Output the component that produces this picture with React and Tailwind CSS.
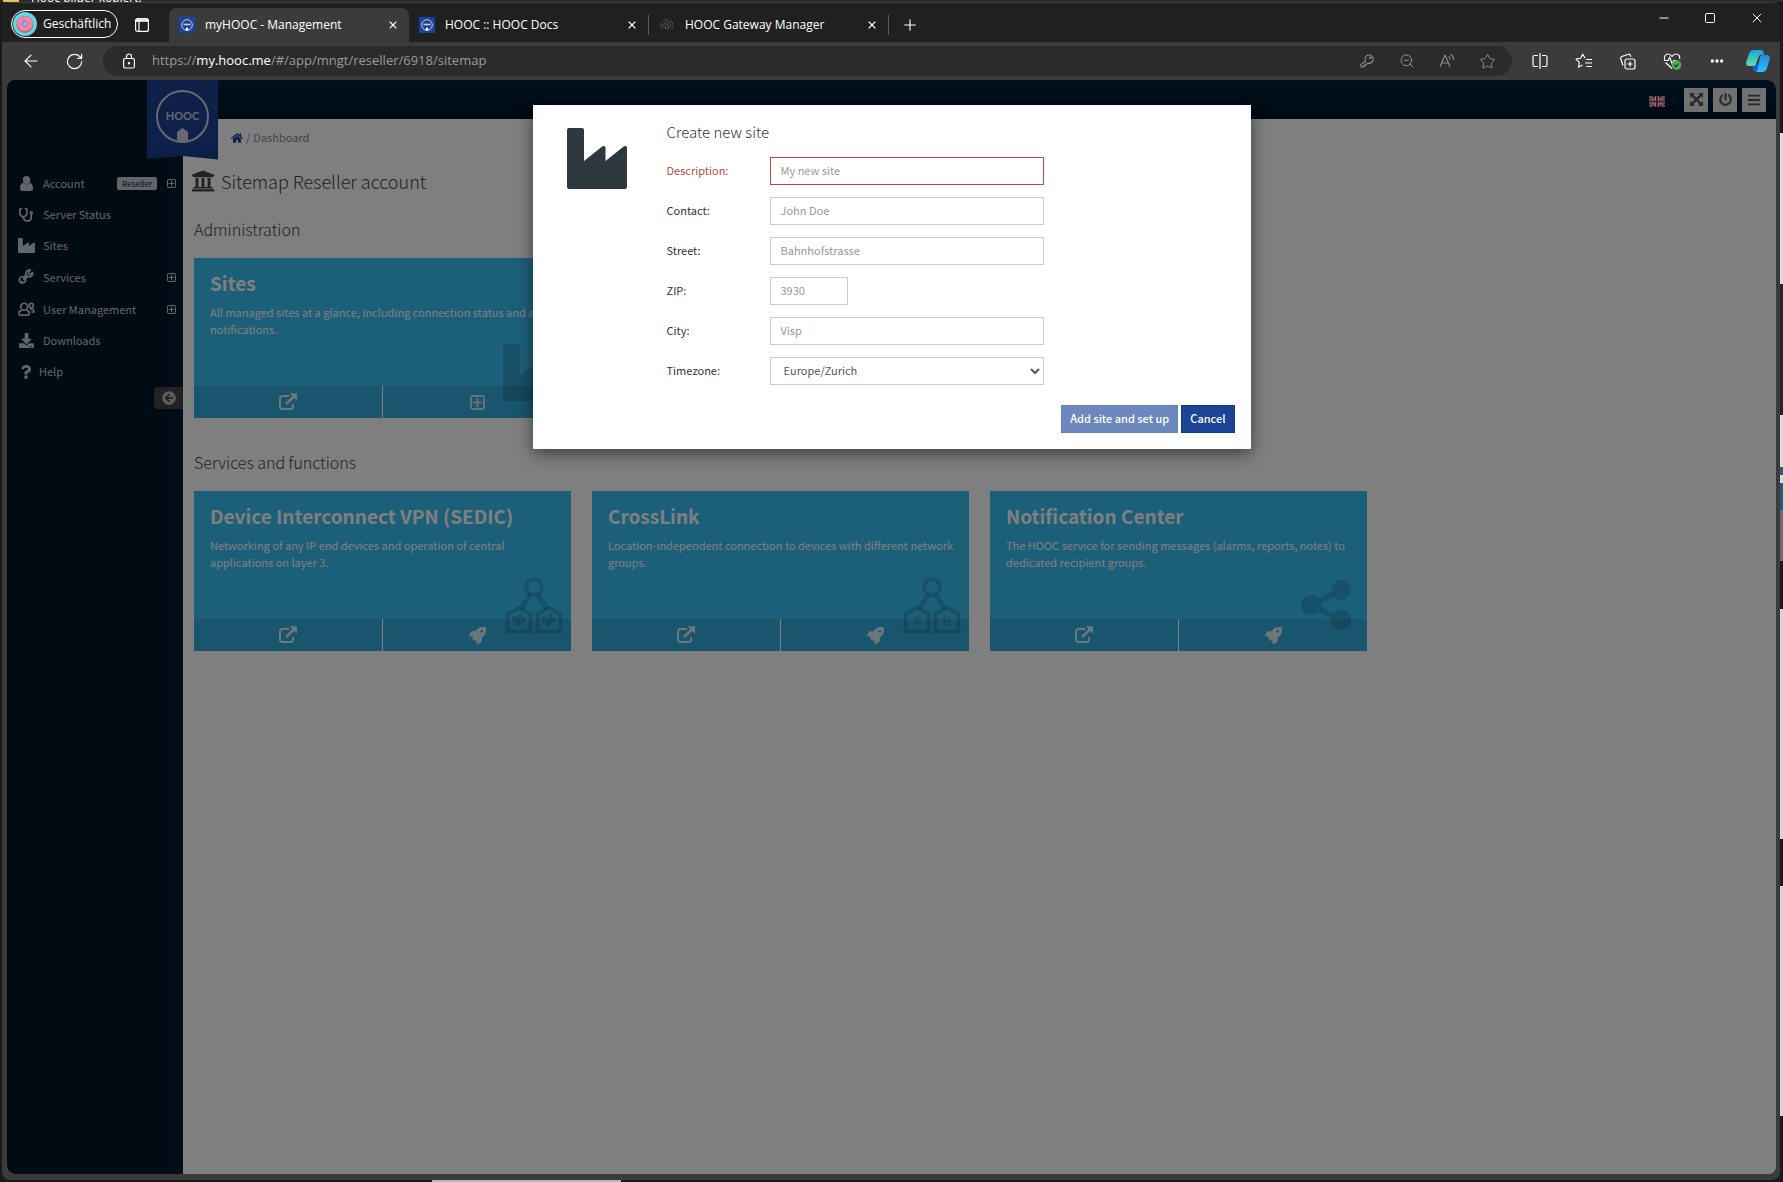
import {
  ArrowLeft,
  RotateCw,
  ZoomOut,
  Star,
  Plus,
  X,
  Minus,
  Square,
  MoreHorizontal,
} from 'lucide-react';
import {
  FaStethoscope,
  FaQuestion,
  FaHome,
  FaUniversity,
  FaPowerOff,
  FaBars,
  FaArrowCircleLeft,
  FaRocket,
  FaDownload,
} from 'react-icons/fa';

const User = ({ className }) => (
  <svg viewBox="0 0 13 15" className={className} fill="currentColor">
    <ellipse cx="6.5" cy="4" rx="3.7" ry="4" />
    <path d="M3 6.500C1 7.500 0 9.500 0 12.500 0 14 1 15 2.500 15h8c1.500 0 2.500-1 2.500-2.500 0-3-1-5-3-6-1.800 2.500-5.200 2.500-7 0z" />
  </svg>
);

const Factory = ({ className }) => (
  <svg viewBox="0 0 60 61" preserveAspectRatio="none" className={className} fill="currentColor">
    <path d="M2 0h13q2 0 2 2v31L35.500 18.300Q38.500 17 38.500 20v13L57 18.300q3-1.300 3 1.700v39q0 2-2 2H2q-2 0-2-2V2q0-2 2-2z" />
  </svg>
);

const Wrench = ({ className }) => (
  <svg viewBox="0 0 18 18" className={className} fill="none" stroke="currentColor">
    <path d="M16.500 3.800a4 4 0 0 1-5.600 4.600L8.400 10.900a3.600 3.600 0 1 1-1.700-1.900l2.500-2.500A4 4 0 0 1 14 1.300L11.800 3.600l.4 2 2 .5z" strokeWidth="1.900" strokeLinejoin="round" />
    <path d="M6 12l5-5" strokeWidth="2.600" />
    <path d="M3.500 15l1.800-1.800" strokeWidth="1.500" />
  </svg>
);

const Users = ({ className }) => (
  <svg viewBox="0 0 18 15" className={className} fill="none" stroke="currentColor" strokeWidth="1.800">
    <circle cx="6.500" cy="5" r="3.600" />
    <path d="M3.800 9C2 9.300 1 10.800 1 12.500c0 1 .6 1.500 1.500 1.500h8c.9 0 1.500-.5 1.500-1.500 0-1.700-1-3.200-2.800-3.500" />
    <circle cx="14" cy="3.800" r="2.300" />
    <path d="M12.500 7.500c2.500-.8 4.500.6 4.500 3.200h-3" />
  </svg>
);

const PlusBox = ({ className }) => (
  <svg viewBox="0 0 16 16" className={className} fill="none" stroke="currentColor" strokeWidth="1.8">
    <rect x="1" y="1" width="14" height="14" rx="2" />
    <path d="M8 3v10M3 8h10" />
  </svg>
);

const External = ({ className }) => (
  <svg viewBox="0 0 20 18" className={className} fill="none" stroke="currentColor" strokeWidth="2">
    <path d="M11 3H4.500A2.500 2.500 0 0 0 2 5.500v8A2.500 2.500 0 0 0 4.500 16h8a2.500 2.500 0 0 0 2.500-2.500V11" />
    <path d="M8 11L16 3.500" strokeWidth="2.800" />
    <path d="M11.500 .3h7.500v7.500z" fill="currentColor" stroke="none" />
  </svg>
);

const Share = ({ className }) => (
  <svg viewBox="0 0 50 50" className={className}>
    <path
      d="M40 0a10 10 0 1 1-7.200 17L20 23.600v2.800L32.800 33A10 10 0 1 1 30.300 38.500L17 31.800a10 10 0 1 1 0-13.600l13.300-6.700A10 10 0 0 1 40 0z"
      fill="currentColor"
    />
  </svg>
);

const Sitemap = ({ className, kind }) => (
  <svg viewBox="0 0 58 58" className={className} fill="none" stroke="currentColor" strokeWidth="4">
    <circle cx="29" cy="11" r="8" />
    <path d="M25 19L16 33M33 19l9 14" strokeWidth="5" />
    <path d="M2.500 55.500V38L14 32l11.500 6v17.500zM32.500 55.500V38L44 32l11.500 6v17.500z" />
    {kind === 'letters' ? (
      <g fill="currentColor" stroke="none" fontSize="13" fontWeight="700" textAnchor="middle">
        <text x="14" y="50">A</text>
        <text x="44" y="50">B</text>
      </g>
    ) : (
      <g fill="currentColor" stroke="none">
        <path d="M14 43c-3-3-1-6 3-5.500 2 .5 1 2.500-.5 3.500 3-1.500 5 0 4.500 4-.5 2.500-3 2-3.500 0-.5 3-2 5.500-6 5-2-.5-1.500-3 1-3.500-4 .5-6-1-5.500-4.500.5-2.500 3-2.500 3.500-.5z" />
        <path d="M44 43c-3-3-1-6 3-5.500 2 .5 1 2.500-.5 3.500 3-1.500 5 0 4.500 4-.5 2.500-3 2-3.500 0-.5 3-2 5.500-6 5-2-.5-1.500-3 1-3.500-4 .5-6-1-5.500-4.500.5-2.500 3-2.500 3.500-.5z" />
      </g>
    )}
  </svg>
);

const Favicon = () => (
  <svg viewBox="0 0 16 16" className="size-4 shrink-0">
    <rect width="16" height="16" fill="#1c449b" />
    <circle cx="8" cy="8" r="5.300" fill="none" stroke="#c3cde6" />
    <path d="M4.500 7.500h7" stroke="#c3cde6" strokeWidth="1.500" />
    <path d="M6.800 13.500v-2.300L8 10.300l1.200.9v2.300z" fill="#fff" />
  </svg>
);

const menu = [
  { label: 'Account', icon: <User className="h-[15px] w-[13px]" />, badge: 'Reseller', sub: true },
  { label: 'Server Status', icon: <FaStethoscope className="size-[14px]" /> },
  { label: 'Sites', icon: <Factory className="h-[15px] w-[17px]" /> },
  { label: 'Services', icon: <Wrench className="size-4" />, sub: true },
  { label: 'User Management', icon: <Users className="h-4 w-[17px]" />, sub: true },
  { label: 'Downloads', icon: <FaDownload className="size-[15px]" /> },
];

const services = [
  {
    title: 'Device Interconnect VPN (SEDIC)',
    text: 'Networking of any IP end devices and operation of central applications on layer 3.',
    art: <Sitemap kind="fan" className="size-[58px]" />,
  },
  {
    title: 'CrossLink',
    text: 'Location-independent connection to devices with different network groups.',
    art: <Sitemap kind="letters" className="size-[58px]" />,
  },
  {
    title: 'Notification Center',
    text: 'The HOOC service for sending messages (alarms, reports, notes) to dedicated recipient groups.',
    art: <Share className="mr-2 mb-1 size-[50px]" />,
  },
];

const fields = [
  { id: 'description', label: 'Description:', placeholder: 'My new site', error: true },
  { id: 'contact', label: 'Contact:', placeholder: 'John Doe' },
  { id: 'street', label: 'Street:', placeholder: 'Bahnhofstrasse' },
  { id: 'zip', label: 'ZIP:', placeholder: '3930', short: true },
  { id: 'city', label: 'City:', placeholder: 'Visp' },
];

const Card = ({ title, text, art, second }) => (
  <article className="relative flex h-40 w-[377px] flex-col justify-between bg-[#38bff2] text-white">
    <div className="pt-3 pr-2 pl-4">
      <h3 className="text-[19px] leading-[26px] font-bold">{title}</h3>
      <p className="mt-2 text-[11px] leading-[17px]">{text}</p>
    </div>
    <div className="flex h-8 divide-x divide-white bg-black/10">
      <button aria-label={`Open ${title}`} className="flex flex-1 items-center justify-center text-white/80">
        <External className="h-[18px] w-5" />
      </button>
      <button aria-label={`Set up ${title}`} className="flex flex-1 items-center justify-center text-white/80">
        {second}
      </button>
    </div>
    <div className="pointer-events-none absolute right-2 bottom-[17px] text-black/15">{art}</div>
  </article>
);

const Tab = ({ icon, title, active }) => (
  <div className={active ? 'flex h-[34px] w-60 items-center rounded-t-lg bg-[#3b3b3b] px-[10px]' : 'flex h-[34px] w-[239px] items-center px-[10px]'}>
    {icon}
    <span className="ml-[10px] flex-1">{title}</span>
    <button aria-label={`Close ${title}`}>
      <X className="size-3" strokeWidth={2.2} />
    </button>
  </div>
);

const BrowserBar = () => (
  <header className="font-['Open_Sans','Noto_Sans',sans-serif] text-white">
    <div className="flex h-10 items-end border-t border-[#3f3f3f] bg-[#202020] text-[12px]">
      <button className="mb-1 ml-[9px] flex h-7 w-[107px] items-center gap-1.5 rounded-full border border-white">
        <svg viewBox="0 0 24 24" className="ml-px size-6 shrink-0">
          <circle cx="12" cy="12" r="12" fill="#5fd8e6" />
          <circle cx="12" cy="12.500" r="8.500" fill="#b5764a" />
          <path d="M12 4.200c4.500 0 7.800 3 7.800 7.200 0 4-3.300 7.600-7.800 7.600s-7.800-3.400-7.800-7.600c0-4.200 3.300-7.200 7.800-7.200z" fill="#f47fb4" />
          <circle cx="12" cy="11.800" r="2.500" fill="#5fd8e6" stroke="#c6609a" />
          <path d="M7 9l1 1M15 7l1 1M17 13l-1 1M8 15l1 1M13 16.500h1" stroke="#f9d66b" />
        </svg>
        <span>Geschäftlich</span>
      </button>
      <button aria-label="Tab actions" className="mb-[10px] ml-[17px]">
        <svg viewBox="0 0 14 14" className="size-[14px]" fill="none" stroke="#fff" strokeWidth="1.200">
          <rect x=".6" y=".6" width="12.800" height="12.800" rx="2" />
          <path d="M1 2.500h12" strokeWidth="2.500" />
          <path d="M4 3v10" />
        </svg>
      </button>
      <div className="ml-5 flex flex-1 items-center">
        <Tab active icon={<Favicon />} title="myHOOC - Management" />
        <Tab icon={<Favicon />} title="HOOC :: HOOC Docs" />
        <div className="h-5 w-px bg-[#5c5c5c]" />
        <Tab
          icon={
            <svg viewBox="0 0 16 16" className="size-4 shrink-0" fill="none" stroke="#555">
              <path d="M3 12A6 6 0 1 1 13 12" strokeDasharray="6 1.500" />
              <path d="M5 10.500a3.500 3.500 0 1 1 6 0M6.500 11.500V8.500L8 7l1.500 1.500v3z" />
            </svg>
          }
          title="HOOC Gateway Manager"
        />
        <div className="h-5 w-px bg-[#5c5c5c]" />
        <button aria-label="New tab" className="ml-3">
          <Plus className="size-[18px]" strokeWidth={1.500} />
        </button>
      </div>
      <div className="mr-[15px] mb-4 flex items-center gap-[33px]">
        <button aria-label="Minimize">
          <Minus className="size-[14px]" strokeWidth={2} />
        </button>
        <button aria-label="Maximize">
          <Square className="size-3" strokeWidth={2} />
        </button>
        <button aria-label="Close window">
          <X className="size-4" strokeWidth={1.500} />
        </button>
      </div>
    </div>

    <div className="flex h-[38px] items-center bg-[#3b3b3b]">
      <button aria-label="Back" className="ml-[19px]">
        <ArrowLeft className="size-5" strokeWidth={1.400} />
      </button>
      <button aria-label="Reload" className="ml-6">
        <RotateCw className="size-[19px]" strokeWidth={1.500} />
      </button>
      <div className="ml-[19px] flex h-[30px] flex-1 items-center rounded-full bg-[#2b2b2b] pr-4 pl-[19px]">
        <svg viewBox="0 0 14 16" className="h-4 w-[14px]" fill="none" stroke="#fff" strokeWidth="1.200">
          <rect x="1.600" y="5.500" width="10.800" height="9.500" rx="1.500" />
          <path d="M4.500 5.500V3.500a2.500 2.500 0 0 1 5 0v2" />
          <circle cx="7" cy="10.300" r=".6" fill="#fff" />
        </svg>
        <span className="ml-4 flex-1 text-[13px] text-[#9a9a9a]">
          https://<span className="text-white">my.hooc.me</span>/#/app/mngt/reseller/6918/sitemap
        </span>
        <div className="flex items-center gap-6 text-[#8f8f8f]">
          <svg viewBox="0 0 16 16" className="size-4" fill="none" stroke="currentColor" strokeWidth="1.100" strokeLinejoin="round">
            <path d="M6.500 8.200A4.200 4.200 0 1 1 9 10.200L8 11H6.500v1.500H5V14H2v-2.500z" />
            <circle cx="11.500" cy="4.800" r=".7" />
          </svg>
          <ZoomOut className="size-4" strokeWidth={1.500} />
          <svg viewBox="0 0 16 16" className="size-4" fill="none" stroke="currentColor" strokeWidth="1.100">
            <path d="M1 14L5.700 2.500h.6L11 14M2.700 10h6.600M9.500 3.500q1.500 1 1.500 3M11.500 1.200Q14.600 3 14.600 7" />
          </svg>
          <Star className="size-[17px]" strokeWidth={1.400} />
        </div>
      </div>
      <div className="mr-[10px] ml-5 flex items-center gap-[27px]">
        <svg viewBox="0 0 16 16" className="size-4" fill="none" stroke="#fff" strokeWidth="1.200">
          <path d="M6 2.500H2.500Q1 2.500 1 4v8q0 1.500 1.500 1.500H6M10 2.500h3.500Q15 2.500 15 4v8q0 1.500-1.500 1.500H10M8 0v16" />
        </svg>
        <svg viewBox="0 0 17 16" className="h-4 w-[17px]" fill="none" stroke="#fff" strokeWidth="1.100" strokeLinejoin="round">
          <path d="M10 5.300L7.800 1 5.600 5.300 1 6l3.300 3.300-.8 5 4-2.200M11 6.500h6M10 10h7M11 13.500h6" />
        </svg>
        <svg viewBox="0 0 17 17" className="size-[17px]" fill="none" stroke="#fff" strokeWidth="1.200">
          <rect x="6" y="6" width="10" height="10" rx="2" />
          <path d="M11 8.500v5M8.500 11h5M4 12.500L1.700 5.500Q1.300 4 2.800 3.500L9.500 1.300q1.400-.3 1.900 1l.4 1.400" />
        </svg>
        <svg viewBox="0 0 19 17" className="h-[17px] w-[19px]" fill="none" stroke="#fff" strokeWidth="1.200">
          <path d="M1.500 7C.5 3 3 1 5 1c2 0 3 1 4 2.300C10 2 11.500 1 13.300 1c2.500 0 4 2.500 3.200 5M2.500 9.500L9 15.500M1 7.500h4l1.700-3 2.400 6 1.500-3h3" />
          <circle cx="13.500" cy="12" r="4.800" fill="#4caf50" stroke="none" />
          <path d="M11.300 12l1.500 1.600 2.800-3" stroke="#20331f" />
        </svg>
        <MoreHorizontal className="size-4" strokeWidth={3} />
        <svg viewBox="0 0 24 22" className="-ml-1.5 h-[22px] w-6">
          <defs>
            <linearGradient id="copA" x1="0" y1="0" x2="0" y2="1">
              <stop offset="0" stopColor="#14a5e6" />
              <stop offset="1" stopColor="#5fe0a0" />
            </linearGradient>
            <linearGradient id="copB" x1="0" y1="0" x2="0" y2="1">
              <stop offset="0" stopColor="#2f7fe8" />
              <stop offset="1" stopColor="#1ec8ff" />
            </linearGradient>
          </defs>
          <path d="M6 14h7l-3 7.500Q8.500 22 7.500 20z" fill="#1b55e0" />
          <path d="M8 0h7q2 0 2.500 2l.7 2.500h-3q-1.800 0-2.500 2L10 14q-.7 2-2.500 2H3q-3.500 0-2.700-4L3 4q1.200-4 5-4z" fill="url(#copA)" />
          <path d="M16.500 5H21q3.500 0 2.700 4L21 18q-1.200 4-5 4H9.500q1.500-.5 2-2.500L14 7q.7-2 2.500-2z" fill="url(#copB)" />
        </svg>
      </div>
    </div>
  </header>
);

const Sidebar = () => (
  <aside className="flex w-44 shrink-0 flex-col bg-linear-to-r from-[#001628] from-90% to-[#00203a] pt-[88px] text-[11px] text-[#c3cdd6]">
    <nav>
      {menu.map((item) => (
        <a key={item.label} href="#" className="flex items-center py-2 leading-[15px]">
          <span className="ml-[9px] flex w-5 justify-center">{item.icon}</span>
          <span className="ml-[7px] flex-1">{item.label}</span>
          {item.badge && (
            <span className="mr-[10px] h-[13px] rounded-[2px] bg-[#c3cdd6] px-[5px] text-[8px] leading-[13px] text-[#001628]">
              {item.badge}
            </span>
          )}
          {item.sub && <PlusBox className="mr-[7px] size-[9px]" />}
        </a>
      ))}
      <a href="#" className="flex items-center py-2 leading-[15px]">
        <FaQuestion className="ml-[12px] size-[14px]" />
        <span className="ml-[6px]">Help</span>
      </a>
    </nav>
    <button aria-label="Collapse menu" className="flex h-[22px] w-[29px] items-center justify-center self-end rounded-l-sm bg-[#444] text-[#bbb]">
      <FaArrowCircleLeft className="size-[14px]" />
    </button>
  </aside>
);

const Logo = () => (
  <svg viewBox="0 0 72 80" className="absolute top-0 left-[140px] h-20 w-[72px]">
    <defs>
      <linearGradient id="ribbon" x1="0" y1="0" x2="0" y2="1">
        <stop offset="0" stopColor="#1b3f8f" />
        <stop offset="0.800" stopColor="#1d439a" />
        <stop offset="1" stopColor="#1a3b86" />
      </linearGradient>
    </defs>
    <path d="M0 0h71v79.500L36 76 0 79z" fill="url(#ribbon)" />
    <circle cx="35.500" cy="36.500" r="25.500" fill="none" stroke="#cdd2de" strokeWidth="2" />
    <path d="M30 62V52l5.500-4 5.500 4v10q-5.500 1.500-11 0z" fill="#cdd2de" />
    <text x="35.500" y="40" fontSize="11" fontWeight="700" fill="#cdd2de" textAnchor="middle" fontFamily="Lato, sans-serif">
      HOOC
    </text>
  </svg>
);

const TopBar = () => (
  <div className="flex h-[39px] items-center justify-end gap-[5px] bg-linear-to-b from-[#00203a] to-[#001426] pr-[10px] text-[#555]">
    <svg viewBox="0 0 16 11" className="mt-1 h-[11px] w-4">
      <rect width="16" height="11" fill="#26337f" />
      <path d="M0 0l16 11M16 0L0 11" stroke="#fff" strokeWidth="2.500" />
      <path d="M0 0l16 11M16 0L0 11" stroke="#d01c3a" />
      <path d="M8 0v11M0 5.500h16" stroke="#fff" strokeWidth="4" />
      <path d="M8 0v11M0 5.500h16" stroke="#d01c3a" strokeWidth="2" />
    </svg>
    <svg viewBox="0 0 7 5" className="mt-1 mr-0.5 h-[5px] w-[7px]" fill="none" stroke="#1c449b">
      <path d="M.5 1l3 3 3-3" />
    </svg>
    <button aria-label="Full screen" className="flex size-6 items-center justify-center bg-[#e3e3e3]">
      <svg viewBox="0 0 14 14" className="size-[13px]" fill="currentColor">
        <path d="M0 0h5.500L0 5.500zM14 0v5.500L8.500 0zM0 14V8.500L5.500 14zM14 14H8.500L14 8.500z" />
        <path d="M2 2l10 10M12 2L2 12" stroke="currentColor" strokeWidth="2.600" />
      </svg>
    </button>
    <button aria-label="Sign out" className="flex size-6 items-center justify-center bg-[#e3e3e3]">
      <FaPowerOff className="size-[13px]" />
    </button>
    <button aria-label="Menu" className="flex size-6 items-center justify-center bg-[#e3e3e3]">
      <FaBars className="size-[14px]" />
    </button>
  </div>
);

const NewSiteDialog = () => (
  <div className="absolute inset-0 flex items-start justify-center bg-black/50 pt-[25px]">
    <form
      role="dialog"
      aria-labelledby="dialog-title"
      className="w-[718px] bg-white p-4 text-[11px] text-[#333] shadow-[0_5px_15px_rgba(0,0,0,0.5)]"
    >
      <div className="flex">
        <Factory className="mt-[7px] ml-[18px] h-[61px] w-[60px] text-[#2f383d]" />
        <div className="ml-10">
          <h2 id="dialog-title" className="text-[15px] leading-[22px] font-light">Create new site</h2>
          <div className="mt-[14px] flex flex-col gap-3">
            {fields.map((f) => (
              <div key={f.id} className="flex items-center">
                <label htmlFor={f.id} className={f.error ? 'w-[103px] pb-0.5 text-[#b94a48]' : 'w-[103px] pb-0.5'}>
                  {f.label}
                </label>
                <input
                  id={f.id}
                  placeholder={f.placeholder}
                  className={`h-7 border px-[10px] pb-0.5 placeholder:text-[#999] ${f.short ? 'w-[78px]' : 'w-[274px]'} ${
                    f.error ? 'border-[#b94a48]' : 'border-[#ccc]'
                  }`}
                />
              </div>
            ))}
            <div className="flex items-center">
              <label htmlFor="timezone" className="w-[103px] pb-0.5">Timezone:</label>
              <select id="timezone" className="h-7 w-[274px] border border-[#ccc] bg-white pb-0.5 pl-[9px] text-[#555]">
                <option>Europe/Zurich</option>
              </select>
            </div>
          </div>
        </div>
      </div>
      <div className="mt-5 flex justify-end gap-[3px] text-white">
        <button type="button" disabled className="h-7 border border-[#6481b8] bg-[#6c88be] px-2 pb-0.5 font-medium">
          Add site and set up
        </button>
        <button type="button" className="h-7 border border-[#163a80] bg-[#1b4396] px-2 pb-0.5 font-medium">
          Cancel
        </button>
      </div>
    </form>
  </div>
);

const Page = () => (
  <div className="relative mr-1 mb-[6px] ml-[5px] flex flex-1 flex-col overflow-hidden rounded-lg bg-white font-['Noto_Sans_CJK_SC',sans-serif]">
    <TopBar />
    <div className="flex flex-1">
      {/* the sidebar runs up behind the top bar */}
      <div className="-mt-[39px] flex">
        <Sidebar />
      </div>
      <main className="flex-1 pl-[11px] text-[#444]">
        <ol className="ml-[37px] flex h-[37px] items-center gap-[3px] text-[11px] text-[#888]">
          <li>
            <a href="#" aria-label="Home" className="text-[#1c449b]">
              <FaHome className="size-3" />
            </a>
          </li>
          <li>/</li>
          <li>Dashboard</li>
        </ol>
        <h1 className="mt-[11px] flex items-center gap-1.5 text-[18px] leading-7 font-light">
          <FaUniversity className="-ml-[3px] size-6" />
          Sitemap Reseller account
        </h1>
        <h2 className="mt-[22px] text-[16px] leading-6 font-light">Administration</h2>
        <div className="mt-[17px] flex gap-[21px]">
          <Card
            title="Sites"
            text="All managed sites at a glance, including connection status and alarm notifications."
            art={<Factory className="h-[57px] w-[60px]" />}
            second={<PlusBox className="size-[15px]" />}
          />
        </div>
        <h2 className="mt-8 text-[16px] leading-6 font-light">Services and functions</h2>
        <div className="mt-[17px] flex gap-[21px]">
          {services.map((s) => (
            <Card key={s.title} {...s} second={<FaRocket className="size-[17px]" />} />
          ))}
        </div>
      </main>
    </div>
    <Logo />
    <NewSiteDialog />
  </div>
);

export default function App() {
  return (
    <div className="flex h-screen min-h-[700px] flex-col bg-[#191919]">
      {/* title bar of the window lying behind */}
      <div className="flex h-[2px] shrink-0 items-end gap-3 overflow-hidden bg-[#2b2b2b] pl-[3px] font-['Open_Sans',sans-serif] text-[12px] text-white">
        <span className="h-[2px] w-4 bg-[#e8c060]" />
        <span className="leading-[8px]">Hooc bilder kopiert!</span>
      </div>
      <div className="flex min-h-0 flex-1">
        <div className="w-[2px] bg-[#191919]" />
        <div className="flex flex-1 flex-col overflow-hidden rounded-lg bg-[#3b3b3b]">
          <BrowserBar />
          <Page />
        </div>
        {/* edge of the window lying behind */}
        <div className="flex w-[3px] flex-col">
          <div className="h-[131px] bg-[#1b1b1b]" />
          <div className="h-[151px] bg-[#ddd]" />
          <div className="h-[131px] bg-[#262626]" />
          <div className="h-[52px] bg-[#ddd]" />
          <div className="h-[8px] bg-[#3b5590]" />
          <div className="h-[8px] bg-[#ddd]" />
          <div className="h-[27px] bg-[#1c6079]" />
          <div className="h-[51px] bg-[#6a6a6a]" />
          <div className="h-[48px] bg-[#1b1b1b]" />
          <div className="h-[230px] bg-[#d5d8d8]" />
          <div className="h-[47px] bg-[#1b1b1b]" />
          <div className="h-[230px] bg-[#d5d8d8]" />
          <div className="flex-1 bg-[#1b1b1b]" />
        </div>
      </div>
      <div className="flex h-[2px] shrink-0 pl-[432px]">
        <div className="w-[189px] bg-[#b5b5b5]" />
      </div>
    </div>
  );
}
